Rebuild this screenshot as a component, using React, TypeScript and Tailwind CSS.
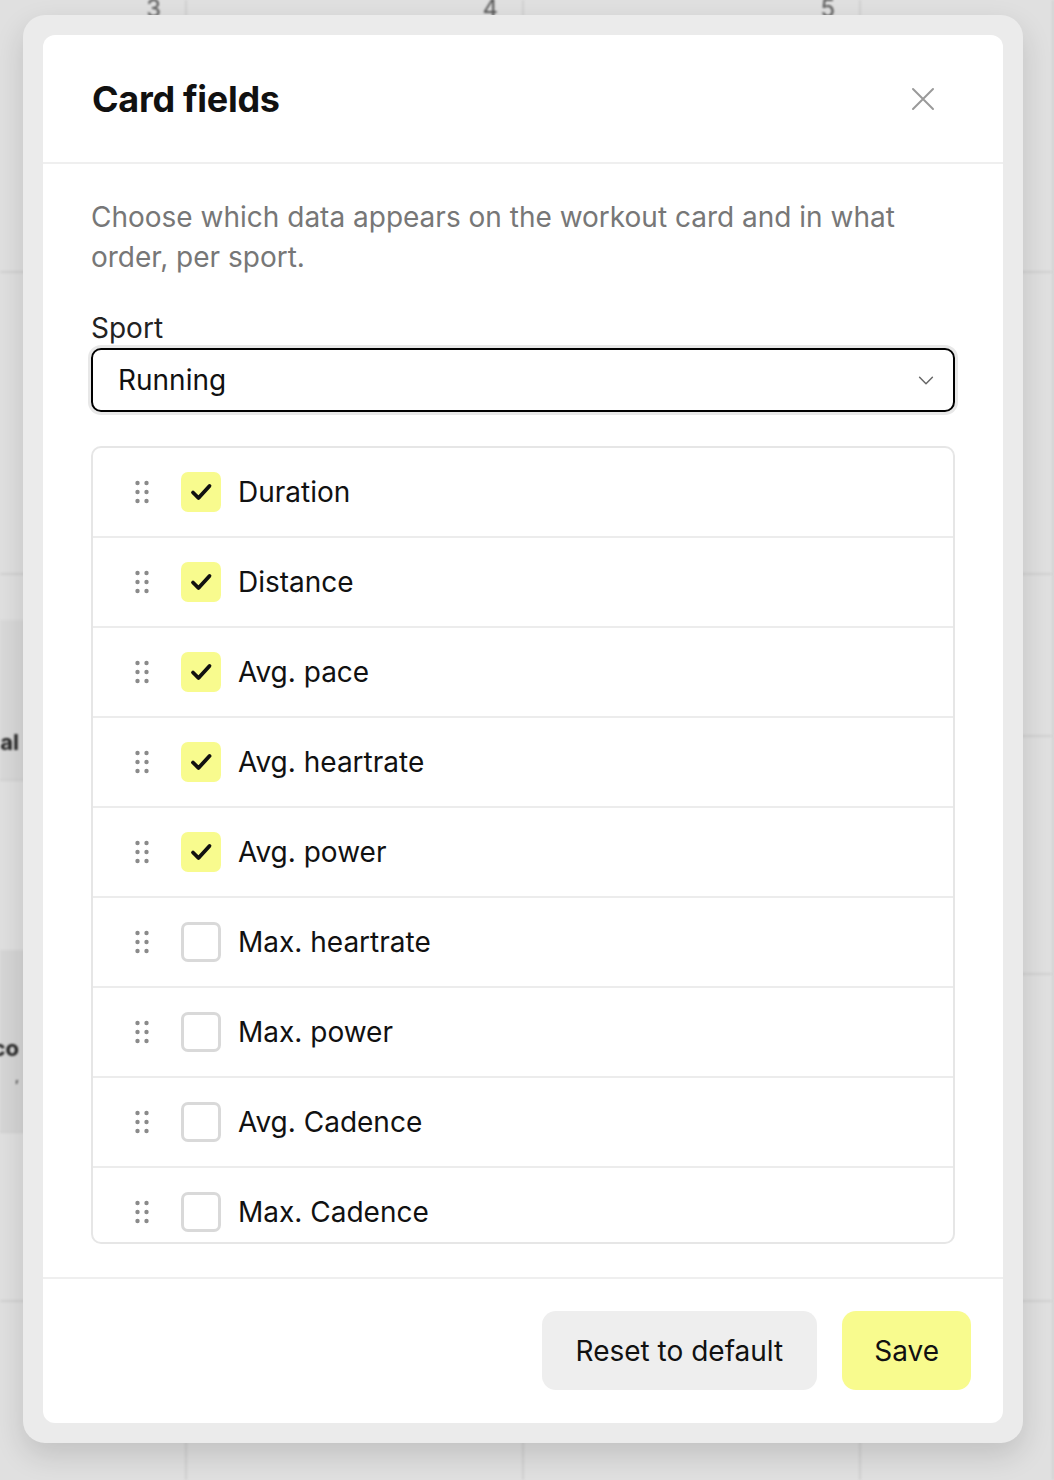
import React from "react";

const fields = [
  { label: "Duration", on: true },
  { label: "Distance", on: true },
  { label: "Avg. pace", on: true },
  { label: "Avg. heartrate", on: true },
  { label: "Avg. power", on: true },
  { label: "Max. heartrate", on: false },
  { label: "Max. power", on: false },
  { label: "Avg. Cadence", on: false },
  { label: "Max. Cadence", on: false },
];

function Grip() {
  return (
    <svg width="14" height="24" viewBox="0 0 14 24" className="shrink-0">
      {[3, 12, 21].map((y) => (
        <g key={y} fill="#8a8a8a">
          <circle cx="2.5" cy={y} r="2.2" />
          <circle cx="11.5" cy={y} r="2.2" />
        </g>
      ))}
    </svg>
  );
}

function Check({ on }: { on: boolean }) {
  if (on)
    return (
      <span className="flex h-[40px] w-[40px] shrink-0 items-center justify-center rounded-[7px] bg-[#f8fb8e]">
        <svg width="40" height="40" viewBox="0 0 40 40">
          <polyline points="12,20.5 17.5,26 28.5,14" fill="none" stroke="#111" strokeWidth="3.8" strokeLinecap="round" strokeLinejoin="round" />
        </svg>
      </span>
    );
  return <span className="block h-[40px] w-[40px] shrink-0 rounded-[7px] border-[3px] border-[#d9d9d9] bg-white" />;
}

function Background() {
  const cols = [
    { w: "w-[187px]", n: "3", rows: ["h-[273px]", "h-[302px]", "h-[206px]", "h-[352px]", "h-[169px]"] },
    { w: "w-[337px]", n: "4", rows: ["h-[273px]", "h-[302px]", "h-[162px]", "h-[238px]", "h-[327px]"] },
    { w: "w-[337px]", n: "5", rows: ["h-[273px]", "h-[302px]", "h-[162px]", "h-[238px]", "h-[327px]"] },
    { w: "w-[193px]", n: "", rows: ["h-[273px]", "h-[302px]", "h-[162px]", "h-[238px]", "h-[327px]"] },
  ];
  return (
    <div className="flex h-[1480px] w-[1054px] blur-[1px]">
      {cols.map((c, ci) => (
        <div key={ci} className={`${c.w} flex shrink-0 flex-col border-r-2 border-[#d2d2d2]`}>
          {c.rows.map((r, ri) => (
            <div key={ri} className={`${r} relative border-b-2 border-[#d2d2d2]`}>
              {ri === 0 && c.n && (
                <span className="absolute -top-[9px] right-[24px] text-[24px] text-[#555]">{c.n}</span>
              )}
              {ci === 0 && ri === 2 && (
                <div className="mt-[45px] flex h-[159px] items-end justify-end bg-[#d9d9d9] pb-[20px] pr-[166px] text-[22px] font-bold text-[#222]">
                  al
                </div>
              )}
              {ci === 0 && ri === 3 && (
                <div className="mt-[169px] flex h-[181px] flex-col items-end bg-[#d6d6d6] pr-[166px] pt-[82px] text-[22px] font-bold text-[#222]">
                  <span>co</span>
                  <span className="text-[14px] font-normal">,</span>
                </div>
              )}
            </div>
          ))}
        </div>
      ))}
    </div>
  );
}

export default function App() {
  return (
    <div className="relative h-[1480px] w-[1054px] overflow-hidden bg-[#e0e0e0] font-['Inter',sans-serif] text-[#111]">
      <Background />

      <div className="absolute left-[23px] top-[15px] w-[1000px] rounded-[22px] bg-[#ebebeb] p-[20px] shadow-[0_12px_30px_rgba(0,0,0,0.14)]">
        <div className="flex flex-col rounded-[12px] bg-white">
          <div className="flex h-[129px] items-center justify-between border-b-2 border-[#efefef] pl-[49px] pr-[60px]">
            <h2 className="text-[36px] font-bold tracking-[-0.3px]">Card fields</h2>
            <button className="flex h-[40px] w-[40px] items-center justify-center">
              <svg width="24" height="24" viewBox="0 0 24 24">
                <path d="M2 2 L22 22 M22 2 L2 22" stroke="#9a9a9a" strokeWidth="2" strokeLinecap="round" />
              </svg>
            </button>
          </div>

          <div className="flex flex-col px-[48px] pb-[33px] pt-[33px]">
            <p className="text-[28px] leading-[40px] text-[#777]">
              Choose which data appears on the workout card and in what order, per sport.
            </p>

            <label className="mt-[33px] text-[28px] leading-[36px] text-[#222]">Sport</label>
            <div className="mt-[2px] flex h-[64px] items-center justify-between rounded-[10px] border-2 border-black pl-[25px] pr-[16px] ring-[3px] ring-[#e8e8e8]">
              <span className="text-[28px]">Running</span>
              <svg width="22" height="22" viewBox="0 0 24 24">
                <polyline points="5,9 12,16 19,9" fill="none" stroke="#666" strokeWidth="1.6" strokeLinecap="round" strokeLinejoin="round" />
              </svg>
            </div>

            <div className="mt-[34px] h-[798px] overflow-hidden rounded-[10px] border-2 border-[#e6e6e6]">
              {fields.map((f) => (
                <div key={f.label} className="flex h-[90px] items-center border-b-2 border-[#ececec] pl-[42px]">
                  <Grip />
                  <span className="ml-[32px] block">
                    <Check on={f.on} />
                  </span>
                  <span className="ml-[17px] text-[28px]">{f.label}</span>
                </div>
              ))}
            </div>
          </div>

          <div className="flex justify-end gap-[25px] border-t-2 border-[#efefef] pb-[33px] pr-[32px] pt-[32px]">
            <button className="h-[79px] rounded-[14px] bg-[#eeeeee] px-[34px] text-[28px]">Reset to default</button>
            <button className="h-[79px] rounded-[14px] bg-[#f8fb8e] px-[32px] text-[28px]">Save</button>
          </div>
        </div>
      </div>
    </div>
  );
}
